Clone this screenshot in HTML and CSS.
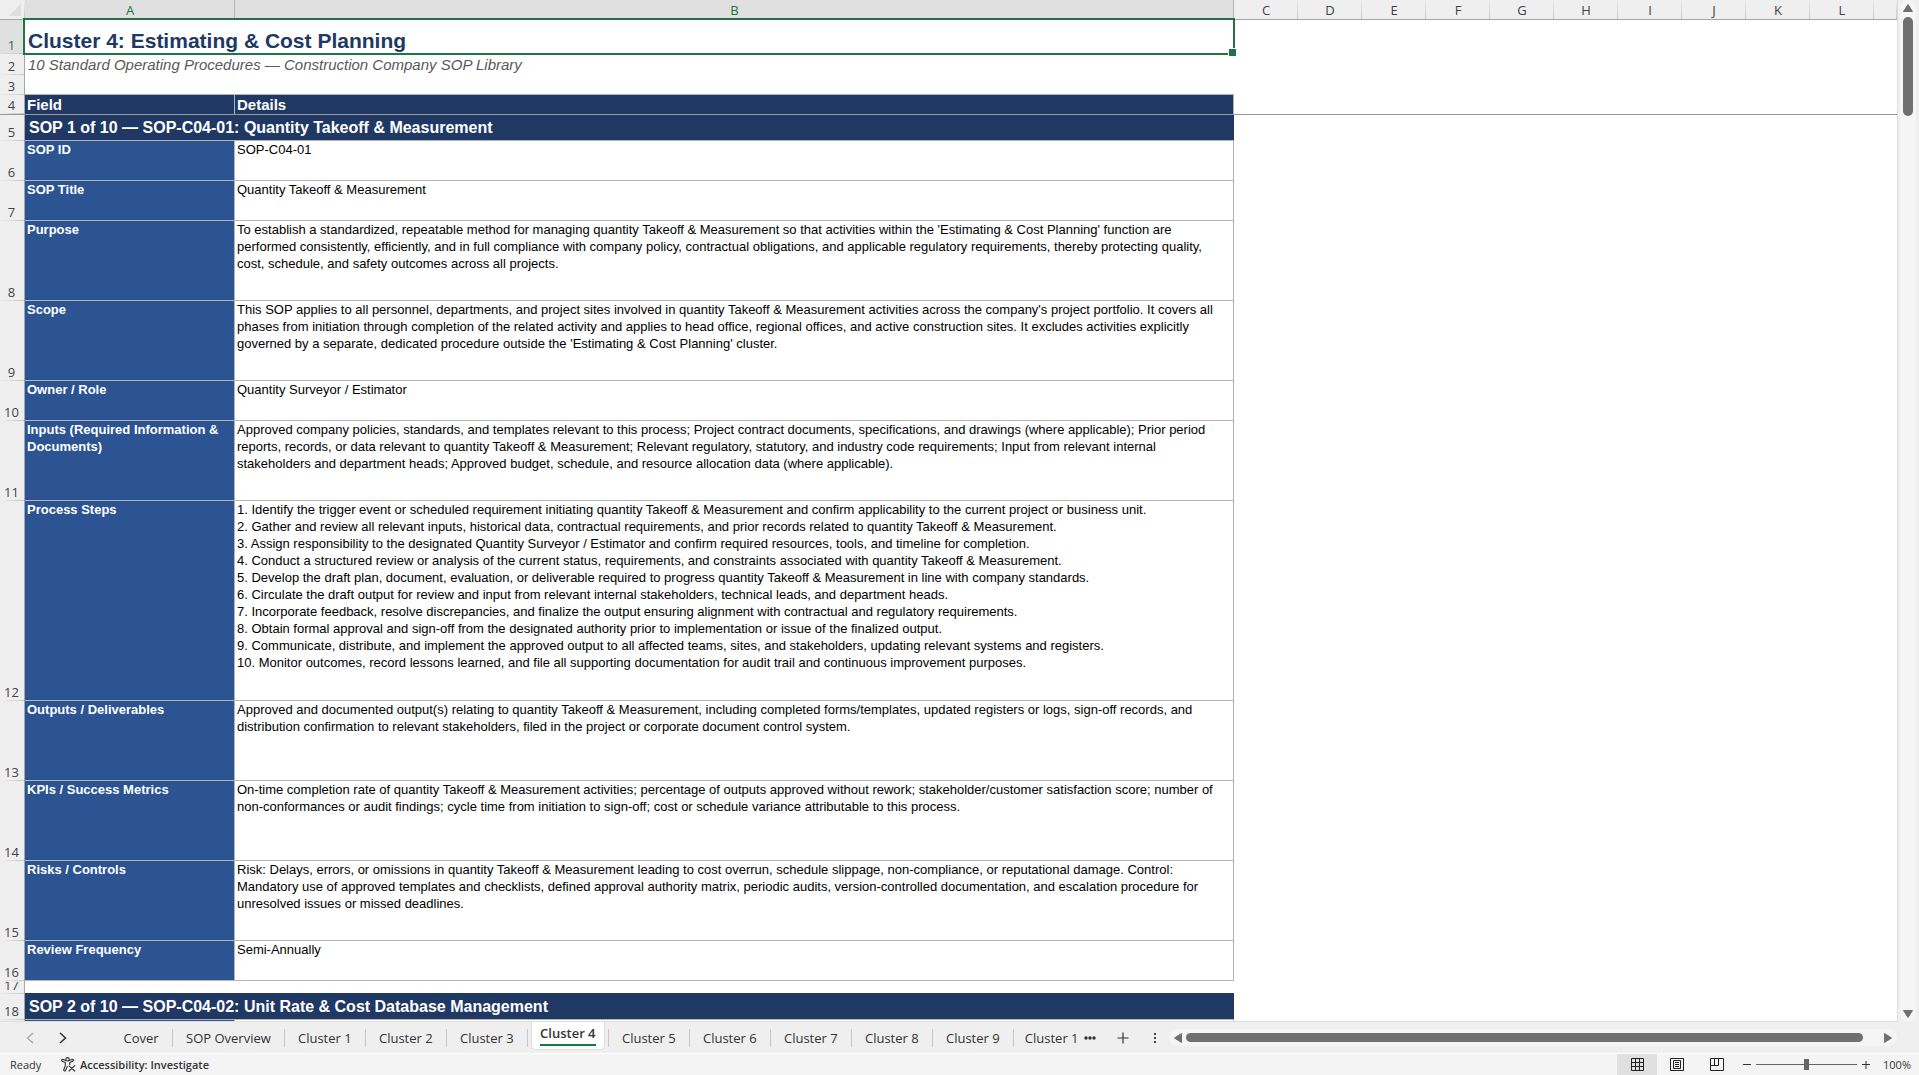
FILE: index.html
```html
<!DOCTYPE html>
<html lang="en">
<head>
<meta charset="utf-8">
<title>Cluster 4 - SOP Library</title>
<link rel="stylesheet" href="styles.css">
</head>
<body>
<main class="workspace">
  <div class="sheet">
    <table class="grid">
      <colgroup>
        <col class="col-num"><col class="col-field"><col class="col-details">
        <col class="col-std"><col class="col-std"><col class="col-std"><col class="col-std"><col class="col-std">
        <col class="col-std"><col class="col-std"><col class="col-std"><col class="col-std"><col class="col-std"><col>
      </colgroup>
      <thead>
        <tr class="letters">
          <th class="corner"><svg width="12" height="12" viewBox="0 0 12 12"><path d="M12 0v12H0z" fill="#dedede"/></svg></th>
          <th class="picked" scope="col">A</th><th class="picked" scope="col">B</th>
          <th scope="col">C</th><th scope="col">D</th><th scope="col">E</th><th scope="col">F</th><th scope="col">G</th>
          <th scope="col">H</th><th scope="col">I</th><th scope="col">J</th><th scope="col">K</th><th scope="col">L</th><th></th>
        </tr>
      </thead>
      <tbody>
        <tr class="r-title"><th class="num picked" scope="row">1</th><td class="title" colspan="2">Cluster 4: Estimating &amp; Cost Planning</td><td colspan="11"></td></tr>
        <tr class="r-sub"><th class="num" scope="row">2</th><td class="subtitle" colspan="2">10 Standard Operating Procedures — Construction Company SOP Library</td><td colspan="11"></td></tr>
        <tr class="r-20"><th class="num" scope="row">3</th><td class="under" colspan="2"></td><td colspan="11"></td></tr>
        <tr class="r-20 frozen"><th class="num" scope="row">4</th><td class="head">Field</td><td class="head">Details</td><td colspan="11"></td></tr>
        <tr class="r-26"><th class="num" scope="row">5</th><td class="section" colspan="2">SOP 1 of 10 — SOP-C04-01: Quantity Takeoff &amp; Measurement</td><td colspan="11"></td></tr>
        <tr class="r-40"><th class="num" scope="row">6</th><td class="field">SOP ID</td><td class="text">SOP-C04-01</td><td colspan="11"></td></tr>
        <tr class="r-40"><th class="num" scope="row">7</th><td class="field">SOP Title</td><td class="text">Quantity Takeoff &amp; Measurement</td><td colspan="11"></td></tr>
        <tr class="r-80"><th class="num" scope="row">8</th><td class="field">Purpose</td><td class="text">To establish a standardized, repeatable method for managing quantity Takeoff &amp; Measurement so that activities within the 'Estimating &amp; Cost Planning' function are<br>performed consistently, efficiently, and in full compliance with company policy, contractual obligations, and applicable regulatory requirements, thereby protecting quality,<br>cost, schedule, and safety outcomes across all projects.</td><td colspan="11"></td></tr>
        <tr class="r-80"><th class="num" scope="row">9</th><td class="field">Scope</td><td class="text">This SOP applies to all personnel, departments, and project sites involved in quantity Takeoff &amp; Measurement activities across the company's project portfolio. It covers all<br>phases from initiation through completion of the related activity and applies to head office, regional offices, and active construction sites. It excludes activities explicitly<br>governed by a separate, dedicated procedure outside the 'Estimating &amp; Cost Planning' cluster.</td><td colspan="11"></td></tr>
        <tr class="r-40"><th class="num" scope="row">10</th><td class="field">Owner / Role</td><td class="text">Quantity Surveyor / Estimator</td><td colspan="11"></td></tr>
        <tr class="r-80"><th class="num" scope="row">11</th><td class="field">Inputs (Required Information &amp;<br>Documents)</td><td class="text">Approved company policies, standards, and templates relevant to this process; Project contract documents, specifications, and drawings (where applicable); Prior period<br>reports, records, or data relevant to quantity Takeoff &amp; Measurement; Relevant regulatory, statutory, and industry code requirements; Input from relevant internal<br>stakeholders and department heads; Approved budget, schedule, and resource allocation data (where applicable).</td><td colspan="11"></td></tr>
        <tr class="r-200"><th class="num" scope="row">12</th><td class="field">Process Steps</td><td class="text">1. Identify the trigger event or scheduled requirement initiating quantity Takeoff &amp; Measurement and confirm applicability to the current project or business unit.<br>2. Gather and review all relevant inputs, historical data, contractual requirements, and prior records related to quantity Takeoff &amp; Measurement.<br>3. Assign responsibility to the designated Quantity Surveyor / Estimator and confirm required resources, tools, and timeline for completion.<br>4. Conduct a structured review or analysis of the current status, requirements, and constraints associated with quantity Takeoff &amp; Measurement.<br>5. Develop the draft plan, document, evaluation, or deliverable required to progress quantity Takeoff &amp; Measurement in line with company standards.<br>6. Circulate the draft output for review and input from relevant internal stakeholders, technical leads, and department heads.<br>7. Incorporate feedback, resolve discrepancies, and finalize the output ensuring alignment with contractual and regulatory requirements.<br>8. Obtain formal approval and sign-off from the designated authority prior to implementation or issue of the finalized output.<br>9. Communicate, distribute, and implement the approved output to all affected teams, sites, and stakeholders, updating relevant systems and registers.<br>10. Monitor outcomes, record lessons learned, and file all supporting documentation for audit trail and continuous improvement purposes.</td><td colspan="11"></td></tr>
        <tr class="r-80"><th class="num" scope="row">13</th><td class="field">Outputs / Deliverables</td><td class="text">Approved and documented output(s) relating to quantity Takeoff &amp; Measurement, including completed forms/templates, updated registers or logs, sign-off records, and<br>distribution confirmation to relevant stakeholders, filed in the project or corporate document control system.</td><td colspan="11"></td></tr>
        <tr class="r-80"><th class="num" scope="row">14</th><td class="field">KPIs / Success Metrics</td><td class="text">On-time completion rate of quantity Takeoff &amp; Measurement activities; percentage of outputs approved without rework; stakeholder/customer satisfaction score; number of<br>non-conformances or audit findings; cycle time from initiation to sign-off; cost or schedule variance attributable to this process.</td><td colspan="11"></td></tr>
        <tr class="r-80"><th class="num" scope="row">15</th><td class="field">Risks / Controls</td><td class="text">Risk: Delays, errors, or omissions in quantity Takeoff &amp; Measurement leading to cost overrun, schedule slippage, non-compliance, or reputational damage. Control:<br>Mandatory use of approved templates and checklists, defined approval authority matrix, periodic audits, version-controlled documentation, and escalation procedure for<br>unresolved issues or missed deadlines.</td><td colspan="11"></td></tr>
        <tr class="r-40"><th class="num" scope="row">16</th><td class="field">Review Frequency</td><td class="text">Semi-Annually</td><td colspan="11"></td></tr>
        <tr class="r-13"><th class="num" scope="row"><div class="clip">17</div></th><td class="spacer" colspan="2"></td><td colspan="11"></td></tr>
        <tr class="r-26"><th class="num" scope="row">18</th><td class="section" colspan="2">SOP 2 of 10 — SOP-C04-02: Unit Rate &amp; Cost Database Management</td><td colspan="11"></td></tr>
        <tr class="r-40"><th class="num" scope="row"></th><td class="field"></td><td class="text"></td><td colspan="11"></td></tr>
      </tbody>
    </table>
  </div>
  <div class="vscroll">
    <button class="arrow" aria-label="Scroll up"><svg width="10" height="8" viewBox="0 0 10 8"><path d="M5 .5 9.500 7.500H.5z" fill="#707070" stroke="#707070" stroke-linejoin="round"/></svg></button>
    <div class="vthumb"></div>
    <button class="arrow" aria-label="Scroll down"><svg width="10" height="8" viewBox="0 0 10 8"><path d="M5 7.500 9.500 .5H.5z" fill="#707070" stroke="#707070" stroke-linejoin="round"/></svg></button>
  </div>
</main>

<nav class="tabbar" aria-label="Sheets">
  <div class="tabnav">
    <button aria-label="Previous sheets"><svg width="8" height="12" viewBox="0 0 8 12"><path d="M7 1 1.500 6 7 11" fill="none" stroke="#a6a6a6" stroke-width="1.300"/></svg></button>
    <button aria-label="Next sheets"><svg width="8" height="12" viewBox="0 0 8 12"><path d="M1 1l5.500 5L1 11" fill="none" stroke="#333" stroke-width="1.500"/></svg></button>
  </div>
  <div class="tabs">
    <button class="tab short">Cover</button>
    <button class="tab">SOP Overview</button>
    <button class="tab">Cluster 1</button>
    <button class="tab">Cluster 2</button>
    <button class="tab">Cluster 3</button>
    <button class="tab active"><span class="face"><span class="name">Cluster 4</span></span></button>
    <button class="tab">Cluster 5</button>
    <button class="tab">Cluster 6</button>
    <button class="tab">Cluster 7</button>
    <button class="tab">Cluster 8</button>
    <button class="tab">Cluster 9</button>
    <button class="tab cut">Cluster 10</button>
  </div>
  <div class="tabtools">
    <button aria-label="More sheets"><svg width="12" height="4" viewBox="0 0 12 4"><g fill="#333"><circle cx="2" cy="2" r="1.700"/><circle cx="6" cy="2" r="1.700"/><circle cx="10" cy="2" r="1.700"/></g></svg></button>
    <button aria-label="New sheet"><svg width="12" height="12" viewBox="0 0 12 12"><path d="M6 .5v11M.5 6h11" stroke="#333" stroke-width="1.200"/></svg></button>
    <button aria-label="Resize"><svg width="2" height="10" viewBox="0 0 2 10"><path d="M0 0h2v2H0zM0 4h2v2H0zM0 8h2v2H0z" fill="#444"/></svg></button>
  </div>
  <div class="hscroll">
    <button class="arrow" aria-label="Scroll left"><svg width="8" height="10" viewBox="0 0 8 10"><path d="M.5 5 7.500 .5v9z" fill="#707070" stroke="#707070" stroke-linejoin="round"/></svg></button>
    <div class="hthumb"></div>
    <button class="arrow" aria-label="Scroll right"><svg width="8" height="10" viewBox="0 0 8 10"><path d="M7.500 5 .5 .5v9z" fill="#707070" stroke="#707070" stroke-linejoin="round"/></svg></button>
  </div>
</nav>

<footer class="status">
  <span class="ready">Ready</span>
  <button class="access">
    <svg width="15" height="15" viewBox="0 0 15 15" fill="none" stroke="#333" stroke-width="1.100" stroke-linecap="round" stroke-linejoin="round"><circle cx="6.500" cy="2.300" r="1.700"/><path d="M4.800 3.600 2 2.400c-1.300-.4-1.900 1.300-.7 1.800l3 1.300v3L2.800 12.700c-.3 1.300 1.200 1.800 1.700.7L6.300 9.600M8.200 3.600 11 2.400c1.300-.4 1.900 1.300.7 1.800l-3 1.300v2M8 8.800l5.800 5.200M13.800 8.600 8 14"/></svg>
    <span>Accessibility: Investigate</span>
  </button>
  <div class="views">
    <button class="on" aria-label="Normal view"><svg width="13" height="13" viewBox="0 0 13 13" fill="none" stroke="#222"><path d="M.5 .5h12v12H.5zM4.500 .5v12M8.500 .5v12M.5 4.500h12M.5 8.500h12"/></svg></button>
    <button aria-label="Page layout"><svg width="14" height="13" viewBox="0 0 14 13" fill="none" stroke="#222"><path d="M.5 .5h13v12H.5zM3.500 2.500h7v8h-7zM5 4.500h4M5 6.500h4M5 8.500h4"/></svg></button>
    <button aria-label="Page break preview"><svg width="14" height="13" viewBox="0 0 14 13" fill="none" stroke="#222"><path d="M.5 .5h13v12H.5zM4.500 .5v7M8.500 .5v7M.5 7.500h8"/></svg></button>
  </div>
  <div class="zoom">
    <button aria-label="Zoom out"><svg width="8" height="8" viewBox="0 0 8 8"><path d="M0 3.500h8" stroke="#333"/></svg></button>
    <input type="range" min="0" max="200" value="100" aria-label="Zoom">
    <button aria-label="Zoom in"><svg width="8" height="8" viewBox="0 0 8 8"><path d="M0 3.500h8M4 0v8" stroke="#333"/></svg></button>
    <button class="percent">100%</button>
  </div>
</footer>
</body>
</html>
```
FILE: styles.css
```css
:root {
  --navy: #203864;
  --blue: #2c5392;
  --line: #b4b4b4;
  --chrome: #efefef;
  --green: #217346;
  --ui: "Open Sans", "Noto Sans", sans-serif;
}
* { box-sizing: border-box; }
body {
  margin: 0;
  height: 100vh;
  display: flex;
  flex-direction: column;
  overflow: hidden;
  background: var(--chrome);
  font-family: var(--ui);
  color: #333;
}
button {
  border: 0;
  padding: 0;
  background: none;
  font: inherit;
  color: inherit;
  display: flex;
  align-items: center;
  justify-content: center;
}
svg { display: block; }

/* Sheet */
.workspace { flex: 1; min-height: 0; display: flex; }
.sheet {
  flex: 1;
  min-width: 0;
  overflow: hidden;
  background: #fff;
  border-right: 1px solid #dedede;
  border-bottom: 1px solid #dedede;
}
.grid {
  table-layout: fixed;
  width: 100%;
  border-collapse: separate;
  border-spacing: 0;
  font-family: "Liberation Sans", Arial, sans-serif;
}
.col-num { width: 25px; }
.col-field { width: 210px; }
.col-details { width: 999px; }
.col-std { width: 64px; }
.grid th, .grid td { padding: 0; white-space: nowrap; }

.letters { height: 20px; }
.letters th {
  font: 13px/18px var(--ui);
  padding-top: 1px;
  color: #444;
  border-bottom: 1px solid #a6a6a6;
  background: linear-gradient(to bottom, transparent, #c4c4c4) right / 1px 100% no-repeat var(--chrome);
}
.letters .picked {
  color: var(--green);
  background: linear-gradient(#b4b4b4, #b4b4b4) right / 1px 100% no-repeat #e0e0e0;
}
.grid .corner { vertical-align: bottom; padding: 0 0 3px 9px; }
.num {
  font: 13px/16px var(--ui);
  color: #444;
  vertical-align: bottom;
  text-align: center;
  border-right: 1px solid #a6a6a6;
  background: linear-gradient(to right, transparent, #c4c4c4) bottom / 100% 1px no-repeat var(--chrome);
}
.grid .num { padding: 0 1px 1px 0; }
.num.picked { color: var(--green); background-color: #e0e0e0; }

.r-title { height: 34px; }
.r-sub { height: 21px; }
.r-13 { height: 13px; }
.r-20 { height: 20px; }
.r-26 { height: 26px; }
.r-40 { height: 40px; }
.r-80 { height: 80px; }
.r-200 { height: 200px; }

.grid .title {
  position: relative;
  padding: 8px 3px 0;
  font-size: 21px;
  line-height: 24px;
  font-weight: bold;
  color: var(--navy);
}
.title::before {
  content: "";
  position: absolute;
  inset: -2px -1px -1px -2px;
  border: 2px solid var(--green);
}
.title::after {
  content: "";
  position: absolute;
  right: -3px;
  bottom: -3px;
  width: 7px;
  height: 7px;
  background: var(--green);
  border: 1px solid #fff;
}
.grid .subtitle {
  padding: 0 3px;
  font-size: 15px;
  line-height: 18px;
  font-style: italic;
  color: #595959;
}
.under { border-bottom: 1px solid var(--line); }
.grid .head {
  padding: 0 2px;
  font-size: 15px;
  line-height: 18px;
  font-weight: bold;
  color: #fff;
  background: var(--navy);
  border-right: 1px solid var(--line);
}
.frozen > * { border-bottom: 1px solid #999; }
.grid .section {
  padding: 0 4px;
  font-size: 16px;
  line-height: 20px;
  font-weight: bold;
  color: #fff;
  background: var(--navy);
  border-bottom: 1px solid var(--line);
}
.field, .text {
  font-size: 13px;
  line-height: 17px;
  vertical-align: top;
  border-right: 1px solid var(--line);
  border-bottom: 1px solid var(--line);
}
.grid .field { padding: 0 2px; font-weight: bold; color: #fff; background: var(--blue); }
.grid .text { padding: 0 2px; color: #000; }
.spacer { border-bottom: 1px solid var(--navy); }
.clip { height: 11px; overflow: hidden; display: flex; align-items: flex-end; justify-content: center; }

/* Scroll bars */
.vscroll {
  width: 16px;
  margin: 0 3px 0 2px;
  padding: 4px 0;
  display: flex;
  flex-direction: column;
  align-items: center;
  background: #f5f5f5;
  border-radius: 8px;
}
.vthumb { width: 10px; height: 99px; margin: 5px 0 auto; border-radius: 5px; background: #707070; }
.hscroll {
  flex: 1;
  height: 17px;
  margin-right: 22px;
  padding: 0 5px;
  display: flex;
  align-items: center;
  background: #f5f5f5;
  border-radius: 9px;
}
.hthumb { flex: 1; height: 9px; margin: 0 21px 0 4px; border-radius: 5px; background: #707070; }

/* Sheet tabs */
.tabbar { height: 31px; display: flex; align-items: center; font-size: 13px; }
.tabnav { width: 110px; padding-left: 26px; display: flex; gap: 25px; }
.tabs { display: flex; align-items: center; height: 31px; }
.tab {
  height: 18px;
  min-width: 81px;
  padding: 0 13px;
  border-right: 1px solid #c8c8c8;
  white-space: nowrap;
}
.tab.short { min-width: 63px; }
.tab.active {
  align-self: flex-start;
  width: 81px;
  height: 31px;
  padding: 0 4px 0 3px;
  border: 0;
  align-items: flex-start;
  background: linear-gradient(#c8c8c8, #c8c8c8) right center / 1px 18px no-repeat;
}
.face {
  width: 74px;
  height: 28px;
  padding-top: 3px;
  display: flex;
  justify-content: center;
  align-items: flex-start;
  background: #fff;
  border: 1px solid #dedede;
  border-top: 0;
  border-radius: 0 0 5px 5px;
}
.name { font-weight: 600; line-height: 17px; padding-bottom: 2px; border-bottom: 2px solid #107c41; }
.tab.cut { min-width: 0; width: 63px; padding: 0 0 0 11px; border: 0; justify-content: flex-start; overflow: hidden; }
.tabtools { width: 92px; display: flex; gap: 21px; align-items: center; padding-left: 7px; }
.tabtools button:last-child { margin-left: 4px; }

/* Status bar */
.status {
  height: 22px;
  display: flex;
  align-items: center;
  padding: 0 8px 0 10px;
  background: #f4f4f4;
  border-top: 1px solid #fff;
  font-size: 11px;
}
.ready { width: 51px; }
.access { gap: 4px; font-weight: 600; }
.views { margin-left: auto; display: flex; align-self: stretch; }
.views button { width: 40px; }
.views .on { background: #e0e0e0; }
.zoom { margin-left: 6px; display: flex; align-items: center; gap: 5px; }
.zoom input { appearance: none; width: 101px; height: 11px; margin: 0; background: linear-gradient(#666, #666) center / 100% 1px no-repeat; }
.zoom input::-webkit-slider-thumb { appearance: none; width: 5px; height: 11px; background: #666; }
.percent { margin-left: 8px; }
```
